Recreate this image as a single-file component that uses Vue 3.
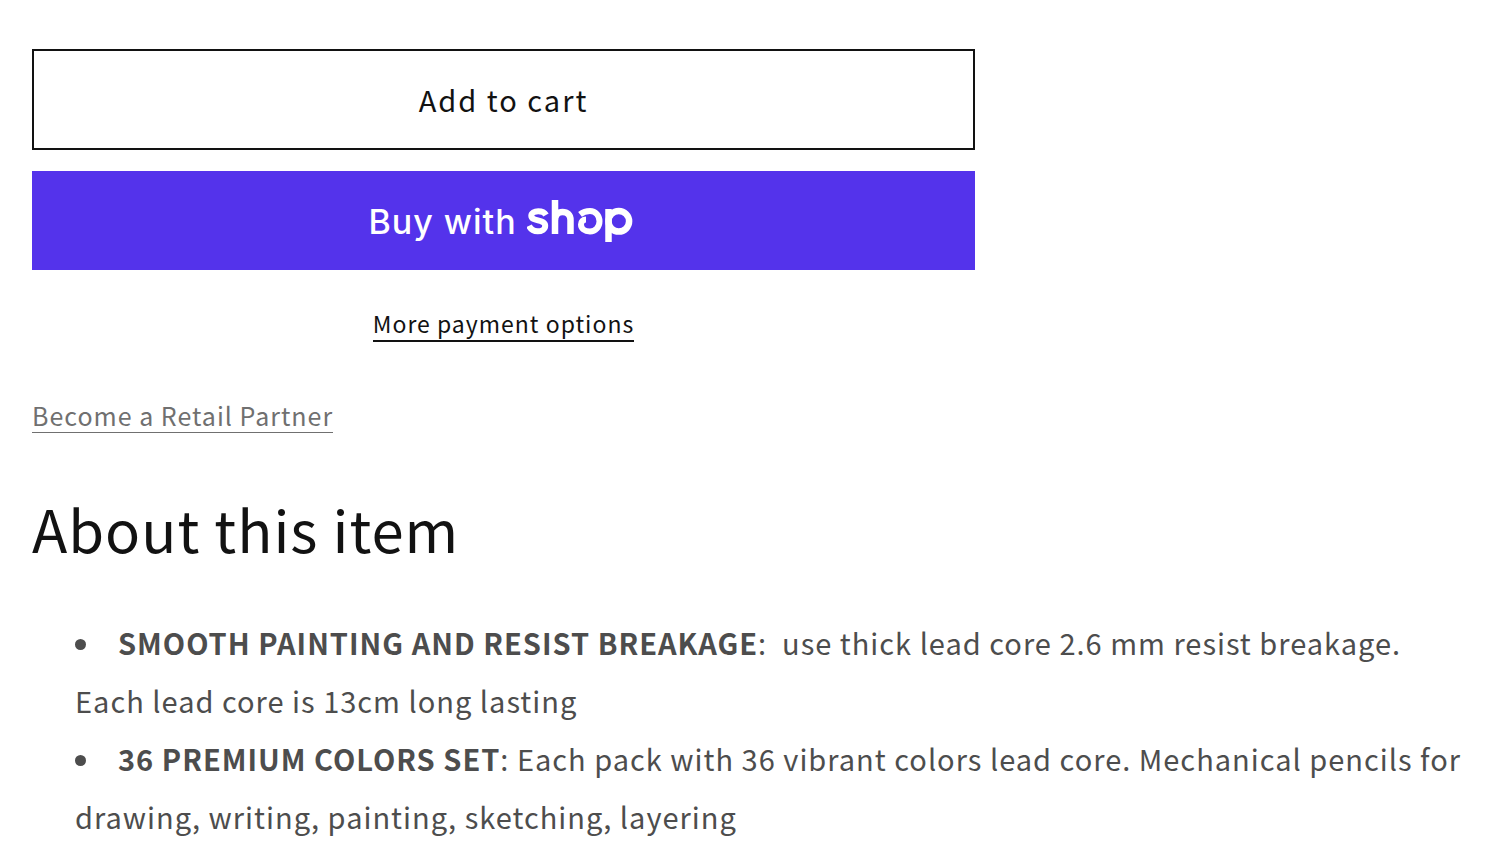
<script setup>
const features = [
  {
    title: 'SMOOTH PAINTING AND RESIST BREAKAGE',
    text: ':\u00a0 use thick lead core 2.6 mm resist breakage. Each lead core is 13cm long lasting',
  },
  {
    title: '36 PREMIUM COLORS SET',
    text: ': Each pack with 36 vibrant colors lead core. Mechanical pencils for drawing, writing, painting, sketching, layering',
  },
]
</script>

<template>
  <main class="product">
    <section class="actions">
      <button type="button" class="btn cart">Add to cart</button>
      <button type="button" class="btn buy" aria-label="Buy with shop">
        <span class="buy-text">Buy with</span>
        <svg class="logo" viewBox="0 0 106 42" width="106" height="42" fill="none" stroke="#fff" stroke-width="6.5" aria-hidden="true">
          <path stroke-width="6" d="M19 15C17.500 12.300 14.500 11.200 11.200 11.200C7.300 11.200 4.300 13 4.300 15.800C4.300 22 18.200 18.700 18.200 25.700C18.200 29.400 14.500 31.300 10.700 31.300C6.500 31.300 3.500 29.200 2 25.800" />
          <path d="M28 0V34M28 20.500C28 15 31 12 35.500 12C40.500 12 43.500 15 43.500 20V34" />
          <path stroke-width="6" d="M53 14.300C57 11.200 60.500 11 63 11C68.500 11 72.500 15.500 72.500 21.300C72.500 27 68.500 31.500 63 31.500C57.500 31.500 54 28.500 54 24.500C54 21.500 56 19.500 59 19.500" />
          <path d="M81.500 9V42" />
          <circle cx="91.800" cy="21.300" r="10.300" />
        </svg>
      </button>
      <a href="#payment" class="more">More payment options</a>
    </section>
    <a href="#partner" class="partner">Become a Retail Partner</a>
    <h1>About this item</h1>
    <ul>
      <li v-for="item in features" :key="item.title"><strong>{{ item.title }}</strong>{{ item.text }}</li>
    </ul>
  </main>
</template>

<style scoped>
.product {
  box-sizing: border-box;
  padding: 49px 32px 0;
  font-family: "Noto Sans CJK SC", "Noto Sans", sans-serif;
  letter-spacing: 1px;
  color: #121212;
}
.actions {
  display: flex;
  flex-direction: column;
  width: 66%;
  max-width: 943px;
}
.btn {
  box-sizing: border-box;
  border-radius: 0;
  padding: 0;
  cursor: pointer;
}
.cart {
  height: 101px;
  margin-bottom: 21px;
  padding-bottom: 2px;
  border: 2px solid #121212;
  background: #fff;
  color: #121212;
  font: 400 29px/40px "Noto Sans CJK SC", sans-serif;
  letter-spacing: 2px;
}
.buy {
  display: flex;
  align-items: center;
  justify-content: center;
  gap: 10px;
  height: 99px;
  padding-right: 6px;
  border: 0;
  background: #5433eb;
  color: #fff;
}
.buy-text {
  padding-top: 2px;
  font: 500 34px/40px Inter, sans-serif;
  letter-spacing: 1px;
}
.more {
  align-self: center;
  margin-top: 40px;
  padding-bottom: 4px;
  border-bottom: 2px solid #121212;
  color: #121212;
  font-size: 23px;
  line-height: 26px;
  text-decoration: none;
}
.partner {
  display: inline-block;
  margin-top: 58px;
  padding-bottom: 2px;
  border-bottom: 1px solid #707070;
  color: #707070;
  font-size: 25px;
  line-height: 30px;
  text-decoration: none;
}
h1 {
  margin: 54px 0 0;
  font-size: 58px;
  font-weight: 400;
  line-height: 82px;
}
ul {
  margin: 44px 0 0;
  padding: 0 0 0 43px;
  list-style-position: inside;
  color: #4d4d4d;
  font-size: 29px;
  line-height: 58px;
}
strong {
  margin-left: 2px;
  font-weight: 700;
}
</style>

<style>
body {
  background: #fff;
}
</style>
